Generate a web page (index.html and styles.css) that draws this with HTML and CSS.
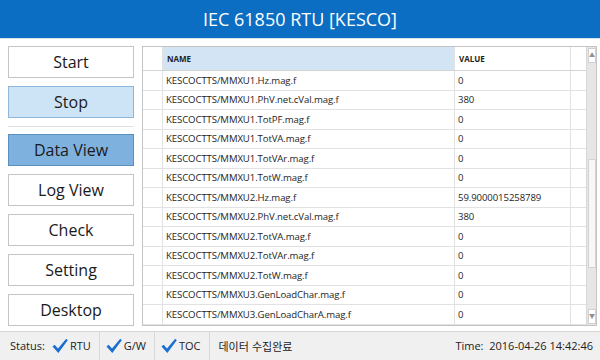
FILE: index.html
```html
<!DOCTYPE html>
<html lang="ko">
<head>
  <meta charset="UTF-8">
  <title>IEC 61850 RTU [KESCO]</title>
  <link rel="stylesheet" href="styles.css">
</head>
<body>
  <div class="titlebar">IEC 61850 RTU [KESCO]</div>

  <div class="main">
    <div class="menu">
      <button class="btn">Start</button>
      <button class="btn btn-stop">Stop</button>
      <div class="sep"></div>
      <button class="btn btn-active">Data View</button>
      <button class="btn">Log View</button>
      <button class="btn">Check</button>
      <button class="btn">Setting</button>
      <button class="btn last">Desktop</button>
    </div>

    <div class="grid">
      <table class="data">
        <thead>
          <tr>
            <th class="rh"></th>
            <th class="col-name">NAME</th>
            <th class="col-value">VALUE</th>
            <th class="fill"></th>
          </tr>
        </thead>
        <tbody>
          <tr><td class="rh"></td><td>KESCOCTTS/MMXU1.Hz.mag.f</td><td>0</td><td class="fill"></td></tr>
          <tr><td class="rh"></td><td>KESCOCTTS/MMXU1.PhV.net.cVal.mag.f</td><td>380</td><td class="fill"></td></tr>
          <tr><td class="rh"></td><td>KESCOCTTS/MMXU1.TotPF.mag.f</td><td>0</td><td class="fill"></td></tr>
          <tr><td class="rh"></td><td>KESCOCTTS/MMXU1.TotVA.mag.f</td><td>0</td><td class="fill"></td></tr>
          <tr><td class="rh"></td><td>KESCOCTTS/MMXU1.TotVAr.mag.f</td><td>0</td><td class="fill"></td></tr>
          <tr><td class="rh"></td><td>KESCOCTTS/MMXU1.TotW.mag.f</td><td>0</td><td class="fill"></td></tr>
          <tr><td class="rh"></td><td>KESCOCTTS/MMXU2.Hz.mag.f</td><td>59.9000015258789</td><td class="fill"></td></tr>
          <tr><td class="rh"></td><td>KESCOCTTS/MMXU2.PhV.net.cVal.mag.f</td><td>380</td><td class="fill"></td></tr>
          <tr><td class="rh"></td><td>KESCOCTTS/MMXU2.TotVA.mag.f</td><td>0</td><td class="fill"></td></tr>
          <tr><td class="rh"></td><td>KESCOCTTS/MMXU2.TotVAr.mag.f</td><td>0</td><td class="fill"></td></tr>
          <tr><td class="rh"></td><td>KESCOCTTS/MMXU2.TotW.mag.f</td><td>0</td><td class="fill"></td></tr>
          <tr><td class="rh"></td><td>KESCOCTTS/MMXU3.GenLoadChar.mag.f</td><td>0</td><td class="fill"></td></tr>
          <tr><td class="rh"></td><td>KESCOCTTS/MMXU3.GenLoadCharA.mag.f</td><td>0</td><td class="fill"></td></tr>
          <tr><td class="rh"></td><td>KESCOCTTS/MMXU3.GenLoadCharB.mag.f</td><td>0</td><td class="fill"></td></tr>
        </tbody>
      </table>
      <div class="scrollbar">
        <div class="arrow">&#9650;</div>
        <div class="track">
          <div class="thumb"></div>
        </div>
        <div class="arrow">&#9660;</div>
      </div>
    </div>
  </div>

  <div class="statusbar">
    <div class="seg first">
      <span>Status:</span>
      <svg class="tick" viewBox="0 0 16 16"><path d="M0.5 8.6 L2.6 6.8 L6 10.4 L14.2 0.8 L15.8 2.3 L6.3 14.9 Z" /></svg>
      <span>RTU</span>
    </div>
    <div class="seg">
      <svg class="tick" viewBox="0 0 16 16"><path d="M0.5 8.6 L2.6 6.8 L6 10.4 L14.2 0.8 L15.8 2.3 L6.3 14.9 Z" /></svg>
      <span>G/W</span>
    </div>
    <div class="seg">
      <svg class="tick" viewBox="0 0 16 16"><path d="M0.5 8.6 L2.6 6.8 L6 10.4 L14.2 0.8 L15.8 2.3 L6.3 14.9 Z" /></svg>
      <span>TOC</span>
    </div>
    <div class="seg msg">데이터 수집완료</div>
    <div class="time">Time:&nbsp; 2016-04-26 14:42:46</div>
  </div>
</body>
</html>
```

FILE: styles.css
```css
body {
  margin: 0;
  width: 600px;
  height: 360px;
  overflow: hidden;
  font-family: "Open Sans", "Noto Sans CJK KR", sans-serif;
  background-color: #ffffff;
  color: #222;
}
.titlebar {
  height: 38px;
  line-height: 38px;
  background-color: #0b6ec3;
  color: #ffffff;
  text-align: center;
  font-size: 18px;
  border-bottom: 1px solid #d8e6f3;
}
.main {
  display: flex;
  padding: 7px 3px 5px 8px;
  height: 280px;
}
.menu {
  width: 126px;
  display: flex;
  flex-direction: column;
  margin-right: 8px;
}
.btn {
  height: 32px;
  margin-bottom: 8px;
  background-color: #ffffff;
  border: 1px solid #c4c4c4;
  font-family: "Open Sans", sans-serif;
  font-size: 16px;
  color: #1a1a1a;
  padding: 0;
}
.btn.last {
  margin-bottom: 0;
}
.btn-stop {
  background-color: #cde3f6;
  border-color: #8fb7da;
}
.btn-active {
  background-color: #7fb1df;
  border-color: #5a8fc2;
}
.sep {
  height: 1px;
  background-color: #e2e2e2;
  margin-bottom: 7px;
}
.grid {
  flex: 1;
  display: flex;
  border: 1px solid #c4c4c4;
  overflow: hidden;
  height: 278px;
}
.data {
  border-collapse: collapse;
  table-layout: fixed;
  width: 439px;
  font-size: 9.6px;
  letter-spacing: -0.1px;
  color: #1e1e1e;
}
.data th {
  height: 23px;
  text-align: left;
  font-weight: bold;
  font-size: 8px;
  letter-spacing: 0;
  padding: 0 0 0 4px;
  border-right: 1px solid #e2e2e2;
  border-bottom: 1px solid #d4d4d4;
  background-color: #ffffff;
}
.data th.col-name {
  width: 287px;
  background-color: #d3e5f5;
}
.data th.col-value {
  width: 111px;
}
.data th.rh,
.data td.rh {
  width: 19px;
  padding: 0;
}
.data th.fill {
  width: 15px;
  padding: 0;
  border-right: none;
}
.data td {
  height: 18.5px;
  padding: 0 0 0 3px;
  white-space: nowrap;
  overflow: hidden;
  border-right: 1px solid #e2e2e2;
  border-bottom: 1px solid #e2e2e2;
}
.data td.fill {
  padding: 0;
  border-right: none;
}
.scrollbar {
  width: 14px;
  display: flex;
  flex-direction: column;
  background-color: #e6e6e6;
  border-left: 1px solid #d8d8d8;
}
.arrow {
  height: 13px;
  font-size: 6px;
  line-height: 13px;
  text-align: center;
  color: #909090;
  background-color: #ffffff;
  border: 1px solid #d0d0d0;
  margin: 1px;
}
.track {
  flex: 1;
  display: flex;
  flex-direction: column;
  padding-top: 95px;
}
.thumb {
  height: 107px;
  background-color: #f7f7f7;
  border: 1px solid #d2d2d2;
  margin: 0 1px;
}
.statusbar {
  display: flex;
  align-items: center;
  height: 28px;
  border-top: 1px solid #d4d4d4;
  background-color: #f0f0f0;
  font-size: 11px;
  line-height: 14px;
  color: #222;
}
.seg {
  display: flex;
  align-items: center;
  height: 28px;
  padding: 0 8px 0 6px;
  border-right: 1px solid #d8d8d8;
}
.seg.first {
  padding-left: 10px;
}
.seg.msg {
  padding-left: 9px;
  border-right: none;
  font-family: "Noto Sans CJK KR", sans-serif;
}
.tick {
  width: 16px;
  height: 16px;
  margin-right: 2px;
  fill: #1a6fd1;
}
.seg.first .tick {
  margin-left: 7px;
}
.time {
  margin-left: auto;
  padding-right: 7px;
}
```
